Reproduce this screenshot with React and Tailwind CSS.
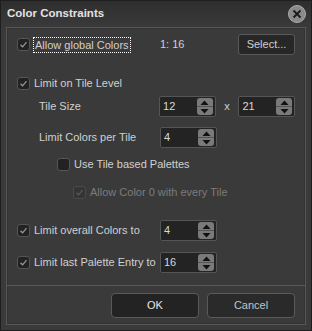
import React from "react";

function Check({ checked, disabled }) {
  return (
    <div
      className={`w-[13px] h-[13px] rounded-[3px] border flex items-center justify-center shrink-0 ${
        disabled ? "border-[#4a4a4a] bg-[#353535]" : "border-[#555] bg-[#222]"
      }`}
    >
      {checked && (
        <svg width="9" height="9" viewBox="0 0 9 9">
          <path
            d="M1.5 4.8 L3.6 6.8 L7.5 2.2"
            fill="none"
            stroke={disabled ? "#5a5a5a" : "#9a9a9a"}
            strokeWidth="1.2"
          />
        </svg>
      )}
    </div>
  );
}

function Spin({ value }) {
  return (
    <div className="w-[57px] h-[21px] flex items-center bg-[#232323] border border-[#555] rounded-[2px] pl-[3px] pr-[2px]">
      <span className="flex-1 text-[#d8d8d8]">{value}</span>
      <div className="w-[16px] h-[17px] rounded-[3px] bg-[#7a7a7a] flex flex-col overflow-hidden">
        <div className="flex-1 flex items-center justify-center border-b border-[#555]">
          <svg width="9" height="5" viewBox="0 0 9 5">
            <path d="M0.5 5 L4.5 0.5 L8.5 5 Z" fill="#111" />
          </svg>
        </div>
        <div className="flex-1 flex items-center justify-center">
          <svg width="9" height="5" viewBox="0 0 9 5">
            <path d="M0.5 0 L4.5 4.5 L8.5 0 Z" fill="#111" />
          </svg>
        </div>
      </div>
    </div>
  );
}

export default function App() {
  return (
    <div
      className="w-[312px] h-[331px] bg-[#3a3a3a] border border-[#1e1e1e] flex flex-col text-[11px] text-[#d0d0d0]"
      style={{ fontFamily: "'Liberation Sans', Arial, sans-serif" }}
    >
      {/* title bar */}
      <div className="h-[26px] shrink-0 flex items-center justify-between pl-[6px] pr-[5px] bg-gradient-to-b from-[#2e2e2e] to-[#3a3a3a]">
        <span className="font-bold text-[11.5px] text-[#e2e2e2]">Color Constraints</span>
        <div className="w-[18px] h-[18px] rounded-full bg-[#8a8a8a] border border-[#aaa] flex items-center justify-center">
          <svg width="10" height="10" viewBox="0 0 10 10">
            <path d="M1.5 1.5 L8.5 8.5 M8.5 1.5 L1.5 8.5" stroke="#1a1a1a" strokeWidth="1.8" />
          </svg>
        </div>
      </div>

      <div className="mx-[5px] mb-[5px] flex-1 flex flex-col border border-[#575757] shadow-[inset_0_0_0_1px_#333]">
        <div className="flex flex-col px-[10px] pt-[6px]">
          <div className="h-[21px] flex items-center">
            <div className="w-[143px] flex items-center">
              <Check checked />
              <span className="ml-[3px] px-[1px] border border-dotted border-white leading-[14px]">Allow global Colors</span>
            </div>
            <span className="flex-1">1: 16</span>
            <button className="w-[57px] h-[21px] rounded-[3px] border border-[#595959] bg-[#272727] text-[#cfcfcf]">
              Select...
            </button>
          </div>

          <div className="h-[21px] mt-[18px] flex items-center">
            <Check checked />
            <span className="ml-[4px]">Limit on Tile Level</span>
          </div>

          <div className="h-[21px] mt-[2px] flex items-center">
            <span className="ml-[22px] w-[121px]">Tile Size</span>
            <Spin value="12" />
            <span className="w-[23px] text-center">x</span>
            <Spin value="21" />
          </div>

          <div className="h-[21px] mt-[10px] flex items-center">
            <span className="ml-[22px] w-[121px]">Limit Colors per Tile</span>
            <Spin value="4" />
          </div>

          <div className="h-[21px] mt-[6px] flex items-center pl-[40px]">
            <Check />
            <span className="ml-[4px]">Use Tile based Palettes</span>
          </div>

          <div className="h-[21px] mt-[7px] flex items-center pl-[56px]">
            <Check checked disabled />
            <span className="ml-[4px] text-[#7c7c7c]">Allow Color 0 with every Tile</span>
          </div>

          <div className="h-[21px] mt-[17px] flex items-center">
            <Check checked />
            <span className="ml-[4px] w-[126px] whitespace-nowrap">Limit overall Colors to</span>
            <Spin value="4" />
          </div>

          <div className="h-[21px] mt-[11px] flex items-center">
            <Check checked />
            <span className="ml-[4px] w-[126px] whitespace-nowrap">Limit last Palette Entry to</span>
            <Spin value="16" />
          </div>
        </div>

        <div className="mt-auto h-[39px] border-t border-[#575757] flex items-center justify-end gap-[8px] pr-[10px]">
          <button className="w-[88px] h-[25px] rounded-[4px] border border-[#5a5a5a] bg-[#232323] text-[#e6e6e6]">
            OK
          </button>
          <button className="w-[88px] h-[25px] rounded-[4px] border border-[#5a5a5a] bg-[#2a2a2a] text-[#c4c4c4]">
            Cancel
          </button>
        </div>
      </div>
    </div>
  );
}
